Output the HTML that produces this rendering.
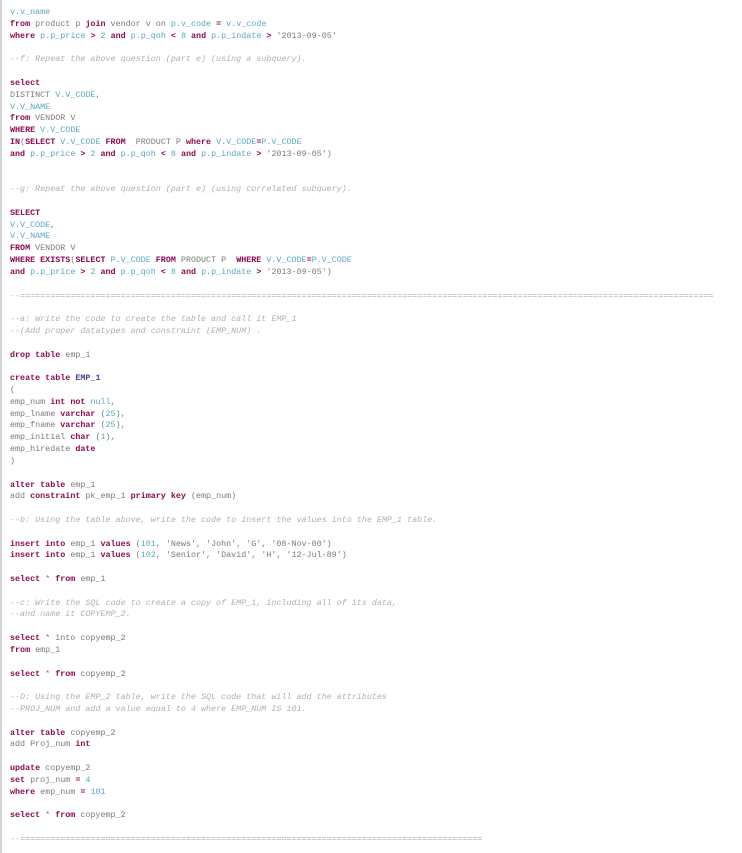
<!DOCTYPE html>
<html><head><meta charset="utf-8"><style>
html,body{margin:0;padding:0;background:#fff;width:742px;height:853px;overflow:hidden}
.wrap{position:absolute;left:0;top:0;width:742px;height:853px;border-left:2px solid #d4d4d4;box-sizing:border-box}
pre{position:absolute;left:8px;top:7px;margin:0;font-family:"Liberation Mono",monospace;font-size:8.4px;line-height:11.81px;color:#7a7a7a;white-space:pre}
.k{color:#8b0a50;font-weight:bold}
.i{color:#5aa8c0}
.c{color:#b0b0b0;font-style:italic}
.t{color:#4b3f93;font-weight:bold}
</style></head><body><div class="wrap"><pre><span class="i">v.v_name</span>
<span class="k">from</span> product p <span class="k">join</span> vendor v on <span class="i">p.v_code</span> <span class="k">=</span> <span class="i">v.v_code</span>
<span class="k">where</span> <span class="i">p.p_price</span> <span class="k">&gt;</span> <span class="i">2</span> <span class="k">and</span> <span class="i">p.p_qoh</span> <span class="k">&lt;</span> <span class="i">8</span> <span class="k">and</span> <span class="i">p.p_indate</span> <span class="k">&gt;</span> '2013-09-05'

<span class="c">--f: Repeat the above question (part e) (using a subquery).</span>

<span class="k">select</span>
DISTINCT <span class="i">V.V_CODE</span>,
<span class="i">V.V_NAME</span>
<span class="k">from</span> VENDOR V
<span class="k">WHERE</span> <span class="i">V.V_CODE</span>
<span class="k">IN</span>(<span class="k">SELECT</span> <span class="i">V.V_CODE</span> <span class="k">FROM</span>  PRODUCT P <span class="k">where</span> <span class="i">V.V_CODE</span><span class="k">=</span><span class="i">P.V_CODE</span>
<span class="k">and</span> <span class="i">p.p_price</span> <span class="k">&gt;</span> <span class="i">2</span> <span class="k">and</span> <span class="i">p.p_qoh</span> <span class="k">&lt;</span> <span class="i">8</span> <span class="k">and</span> <span class="i">p.p_indate</span> <span class="k">&gt;</span> '2013-09-05')


<span class="c">--g: Repeat the above question (part e) (using correlated subquery).</span>

<span class="k">SELECT</span>
<span class="i">V.V_CODE</span>,
<span class="i">V.V_NAME</span>
<span class="k">FROM</span> VENDOR V
<span class="k">WHERE EXISTS</span>(<span class="k">SELECT</span> <span class="i">P.V_CODE</span> <span class="k">FROM</span> PRODUCT P  <span class="k">WHERE</span> <span class="i">V.V_CODE</span><span class="k">=</span><span class="i">P.V_CODE</span>
<span class="k">and</span> <span class="i">p.p_price</span> <span class="k">&gt;</span> <span class="i">2</span> <span class="k">and</span> <span class="i">p.p_qoh</span> <span class="k">&lt;</span> <span class="i">8</span> <span class="k">and</span> <span class="i">p.p_indate</span> <span class="k">&gt;</span> '2013-09-05')

<span class="c">--==========================================================================================================================================</span>

<span class="c">--a: Write the code to create the table and call it EMP_1</span>
<span class="c">--(Add proper datatypes and constraint (EMP_NUM) .</span>

<span class="k">drop table</span> emp_1

<span class="k">create table</span> <span class="t">EMP_1</span>
(
emp_num <span class="k">int not</span> <span class="i">null</span>,
emp_lname <span class="k">varchar</span> (<span class="i">25</span>),
emp_fname <span class="k">varchar</span> (<span class="i">25</span>),
emp_initial <span class="k">char</span> (<span class="i">1</span>),
emp_hiredate <span class="k">date</span>
)

<span class="k">alter table</span> emp_1
add <span class="k">constraint</span> pk_emp_1 <span class="k">primary key</span> (emp_num)

<span class="c">--b: Using the table above, write the code to insert the values into the EMP_1 table.</span>

<span class="k">insert into</span> emp_1 <span class="k">values</span> (<span class="i">101</span>, 'News', 'John', 'G', '08-Nov-00')
<span class="k">insert into</span> emp_1 <span class="k">values</span> (<span class="i">102</span>, 'Senior', 'David', 'H', '12-Jul-89')

<span class="k">select</span> * <span class="k">from</span> emp_1

<span class="c">--c: Write the SQL code to create a copy of EMP_1, including all of its data,</span>
<span class="c">--and name it COPYEMP_2.</span>

<span class="k">select</span> * into copyemp_2
<span class="k">from</span> emp_1

<span class="k">select</span> * <span class="k">from</span> copyemp_2

<span class="c">--D: Using the EMP_2 table, write the SQL code that will add the attributes</span>
<span class="c">--PROJ_NUM and add a value equal to 4 where EMP_NUM IS 101.</span>

<span class="k">alter table</span> copyemp_2
add Proj_num <span class="k">int</span>

<span class="k">update</span> copyemp_2
<span class="k">set</span> proj_num <span class="k">=</span> <span class="i">4</span>
<span class="k">where</span> emp_num <span class="k">=</span> <span class="i">101</span>

<span class="k">select</span> * <span class="k">from</span> copyemp_2

<span class="c">--============================================================================================</span></pre></div></body></html>
